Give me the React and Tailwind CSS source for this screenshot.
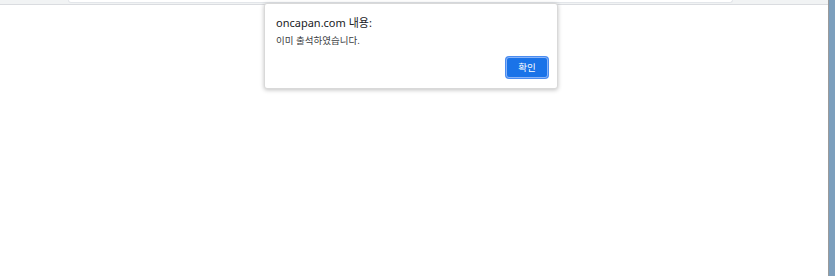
import React from 'react'

const App = () => {
  return (
    <div className="w-[835px] h-[276px] bg-white flex overflow-hidden" style={{ fontFamily: '"Noto Sans", "Noto Sans CJK KR", sans-serif' }}>
      <div className="flex-1 flex flex-col relative">
        {/* browser toolbar edge */}
        <div className="h-[5px] bg-[#f1f3f4] border-b border-[#dadce0] flex">
          <div className="ml-[68px] w-[665px] h-[3px] bg-white rounded-b-[8px] border-b border-x border-[#e3e6ea]" />
        </div>
        <div className="flex-1 bg-white" />

        {/* alert dialog */}
        <div className="absolute left-[264px] top-[3px] w-[294px] h-[86px] bg-white rounded-[3px] border border-[#d9d9d9] shadow-[0_1px_4px_rgba(0,0,0,0.25)] flex flex-col px-[11px] pt-[12px]">
          <p className="text-[11px] leading-[14px] text-[#202124]">oncapan.com 내용:</p>
          <p className="mt-[5px] text-[9.5px] leading-[12px] text-[#3c4043]">이미 출석하였습니다.</p>
          <div className="flex justify-end mt-[10px] mr-[-2px]">
            <button className="w-[42px] h-[21px] rounded-[3px] bg-[#1a73e8] text-white text-[9.5px] leading-none border border-[#8ab4f8] ring-1 ring-[#4a8cf0]">
              확인
            </button>
          </div>
        </div>
      </div>
      <div className="w-[7px] h-full bg-[#7c9fbd] border-l border-[#9a9a9a]" />
    </div>
  )
}

export default App
